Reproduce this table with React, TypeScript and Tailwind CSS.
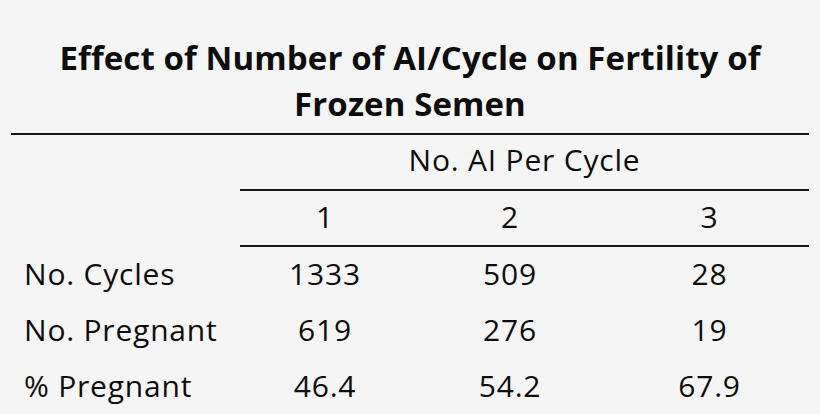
import React from "react";

const rows = [
  ["No. Cycles", "1333", "509", "28"],
  ["No. Pregnant", "619", "276", "19"],
  ["% Pregnant", "46.4", "54.2", "67.9"],
];

export default function App() {
  return (
    <div className="w-[820px] h-[414px] bg-[#f5f5f5] text-[#0d0d0d] overflow-hidden" style={{ fontFamily: "'Open Sans', Lato, sans-serif" }}>
      <div className="pt-[35px] px-[11px]">
        <div className="border-b-2 border-[#1a1a1a] pb-[6px] text-center font-bold text-[33px] leading-[46px] tracking-[0.1px]">
          <div>Effect of Number of AI/Cycle on Fertility of</div>
          <div>Frozen Semen</div>
        </div>
        <div className="grid grid-cols-[229px_170px_200px_199px] text-[30px] tracking-[0.8px]">
          <div className="h-[56px]" />
          <div className="col-span-3 h-[56px] pb-[5px] border-b-2 border-[#1a1a1a] flex items-center justify-center">No. AI Per Cycle</div>
          <div className="h-[56px]" />
          <div className="h-[56px] pb-[4px] border-b-2 border-[#1a1a1a] flex items-center justify-center">1</div>
          <div className="h-[56px] pb-[4px] border-b-2 border-[#1a1a1a] flex items-center justify-center">2</div>
          <div className="h-[56px] pb-[4px] border-b-2 border-[#1a1a1a] flex items-center justify-center">3</div>
          {rows.map((r) => (
            <React.Fragment key={r[0]}>
              <div className="h-[56px] pb-[4px] flex items-center pl-[13px]">{r[0]}</div>
              <div className="h-[56px] pb-[4px] flex items-center justify-center">{r[1]}</div>
              <div className="h-[56px] pb-[4px] flex items-center justify-center">{r[2]}</div>
              <div className="h-[56px] pb-[4px] flex items-center justify-center">{r[3]}</div>
            </React.Fragment>
          ))}
        </div>
      </div>
    </div>
  );
}
